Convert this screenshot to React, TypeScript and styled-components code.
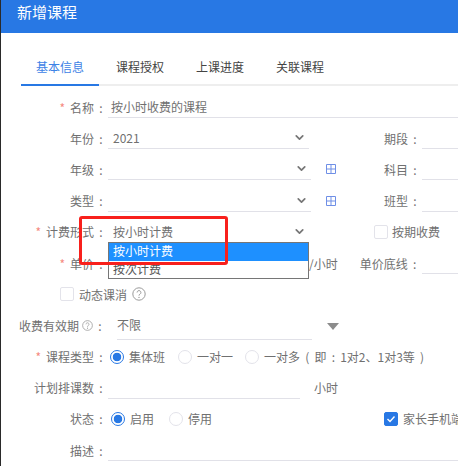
import * as React from "react";
import styled, { createGlobalStyle } from "styled-components";
import { ChevronDown } from "lucide-react";

const BLUE = "#2878e4";
const TEXT = "#707070";
const LINE = "#e1e1e8";

const GlobalStyle = createGlobalStyle`
	html, body {
		margin: 0;
		padding: 0;
		background: #ffffff;
	}
	body {
		font-family: "Noto Sans CJK SC", "Noto Sans", sans-serif;
		font-size: 12px;
		color: ${TEXT};
	}
`;

const Page = styled.div`
	position: relative;
	width: 458px;
	height: 466px;
	overflow: hidden;
	box-sizing: border-box;
	border-left: 1px solid #2a2a2a;
	background: #ffffff;
`;

const Header = styled.div`
	height: 33px;
	padding-left: 16px;
	background: ${BLUE};
	color: #ffffff;
	font-size: 15px;
	line-height: 24px;
`;

const Tabs = styled.div`
	display: flex;
	height: 35px;
	margin: 16px 0 0 20px;
	border-bottom: 2px solid #eeeeee;
`;

const Tab = styled.div<{ $active?: boolean }>`
	width: 78px;
	margin-right: 2px;
	margin-bottom: -2px;
	text-align: center;
	line-height: 35px;
	color: ${(p) => (p.$active ? "#3d82e6" : "#444444")};
	border-bottom: 2px solid ${(p) => (p.$active ? BLUE : "transparent")};
`;

const Form = styled.div`
	padding-top: 5.5px;
`;

const Row = styled.div`
	display: flex;
	align-items: center;
	height: 31.2px;
`;

const Label = styled.div<{ $w?: number }>`
	flex: none;
	display: flex;
	align-items: center;
	justify-content: flex-end;
	width: ${(p) => p.$w ?? 107}px;
	box-sizing: border-box;
	white-space: nowrap;
`;

const Star = styled.span`
	margin-right: 5px;
	color: #f58a80;
`;

const Colon = styled.span`
	width: 14px;
	text-align: center;
`;

const Field = styled.div<{ $w: number; $pad?: number; $h?: number; $left?: number }>`
	position: relative;
	flex: none;
	display: flex;
	align-items: center;
	justify-content: space-between;
	width: ${(p) => p.$w}px;
	height: ${(p) => p.$h ?? 22}px;
	margin-left: ${(p) => p.$left ?? 0}px;
	padding: 0 4px 0 ${(p) => p.$pad ?? 4}px;
	box-sizing: border-box;
	border-bottom: 1px solid ${LINE};
`;

const Value = styled.span`
	white-space: nowrap;
`;

const Chevron = styled(ChevronDown)`
	width: 13px;
	height: 13px;
	margin-right: -1px;
	color: #777777;
	stroke-width: 3.2;
`;

const Dropdown = styled.div`
	position: absolute;
	left: 0;
	top: 21.5px;
	z-index: 2;
	width: 201px;
	height: 37px;
	box-sizing: border-box;
	border: 1px solid #767676;
	background: #ffffff;
	color: #555555;
`;

const Option = styled.div<{ $on?: boolean }>`
	height: 17.5px;
	line-height: 16px;
	padding-left: 4px;
	background: ${(p) => (p.$on ? "#1e90ff" : "transparent")};
	color: ${(p) => (p.$on ? "#ffffff" : "#555555")};
`;

const Callout = styled.div`
	position: absolute;
	left: 78px;
	top: 216px;
	z-index: 3;
	width: 149px;
	height: 49px;
	box-sizing: border-box;
	border: 3px solid #f8201c;
	border-radius: 3px;
`;

const Tick = styled.span<{ $on?: boolean }>`
	flex: none;
	display: inline-flex;
	align-items: center;
	justify-content: center;
	width: 14px;
	height: 14px;
	box-sizing: border-box;
	border: 1px solid ${(p) => (p.$on ? BLUE : "#e3e3ea")};
	border-radius: 2px;
	background: ${(p) => (p.$on ? BLUE : "#ffffff")};
`;

const CheckLine = styled.div<{ $left: number; $gap?: number }>`
	display: flex;
	align-items: center;
	gap: ${(p) => p.$gap ?? 5}px;
	margin-left: ${(p) => p.$left}px;
	white-space: nowrap;
`;

const RadioGroup = styled.div<{ $left?: number }>`
	display: flex;
	align-items: center;
	margin-left: ${(p) => p.$left ?? 2}px;
`;

const RadioItem = styled.div<{ $gap: number }>`
	display: flex;
	align-items: center;
	gap: 5px;
	margin-right: ${(p) => p.$gap}px;
	white-space: nowrap;
`;

const RadioDot = styled.span<{ $on?: boolean }>`
	flex: none;
	width: 14px;
	height: 14px;
	box-sizing: border-box;
	border-radius: 50%;
	border: 1px solid ${(p) => (p.$on ? BLUE : "#e3e3ea")};
	background: ${(p) => (p.$on ? `radial-gradient(circle, ${BLUE} 0 4px, #ffffff 4.6px)` : "#ffffff")};
`;

const WideNote = styled.span`
	word-spacing: 2.5px;
`;

const Suffix = styled.span<{ $left: number }>`
	margin-left: ${(p) => p.$left}px;
	white-space: nowrap;
`;

const Caret = styled.span`
	flex: none;
	width: 0;
	height: 0;
	margin: 2px 0 0 15px;
	border-left: 6px solid transparent;
	border-right: 6px solid transparent;
	border-top: 7px solid #8c8c8c;
`;

const HelpSpacer = styled.span`
	width: 3px;
`;

const GridGlyph = styled.svg`
	flex: none;
	margin-left: 15px;
`;

const HelpGlyph = styled.svg`
	flex: none;
`;

function GridIcon() {
	return (
		<GridGlyph width="10" height="10" viewBox="0 0 10 10">
			<path d="M.5.5h9v9h-9zM5 .5v9M.5 5h9" fill="none" stroke="#6f8fe6" strokeWidth="1" />
		</GridGlyph>
	);
}

function HelpIcon({ size }: { size: number }) {
	return (
		<HelpGlyph width={size} height={size} viewBox="0 0 14 14">
			<circle cx="7" cy="7" r="6.2" fill="none" stroke="#9a9a9a" strokeWidth="1" />
			<path d="M5.1 5.5a1.9 1.9 0 1 1 2.9 1.6c-.7.4-1 .8-1 1.5" fill="none" stroke="#9a9a9a" strokeWidth="1" />
			<circle cx="7" cy="10.4" r=".7" fill="#9a9a9a" />
		</HelpGlyph>
	);
}

function FormLabel({ text, required, width }: { text: string; required?: boolean; width?: number }) {
	return (
		<Label $w={width}>
			{required && <Star>*</Star>}
			{text}
			<Colon>:</Colon>
		</Label>
	);
}

export default function App() {
	return (
		<>
			<GlobalStyle />
			<Page>
				<Header>新增课程</Header>
				<Tabs>
					<Tab $active>基本信息</Tab>
					<Tab>课程授权</Tab>
					<Tab>上课进度</Tab>
					<Tab>关联课程</Tab>
				</Tabs>
				<Form>
					<Row>
						<FormLabel text="名称" required />
						<Field $w={350} $pad={3}>
							<Value>按小时收费的课程</Value>
						</Field>
					</Row>
					<Row>
						<FormLabel text="年份" />
						<Field $w={201} $pad={5}>
							<Value>2021</Value>
							<Chevron />
						</Field>
						<FormLabel text="期段" width={113} />
						<Field $w={40}>&nbsp;</Field>
					</Row>
					<Row>
						<FormLabel text="年级" />
						<Field $w={203}>
							&nbsp;
							<Chevron />
						</Field>
						<GridIcon />
						<FormLabel text="科目" width={86} />
						<Field $w={40}>&nbsp;</Field>
					</Row>
					<Row>
						<FormLabel text="类型" />
						<Field $w={203}>
							&nbsp;
							<Chevron />
						</Field>
						<GridIcon />
						<FormLabel text="班型" width={86} />
						<Field $w={40}>&nbsp;</Field>
					</Row>
					<Row>
						<FormLabel text="计费形式" required />
						<Field $w={201} $pad={5}>
							<Value>按小时计费</Value>
							<Chevron />
							<Dropdown>
								<Option $on>按小时计费</Option>
								<Option>按次计费</Option>
							</Dropdown>
						</Field>
						<CheckLine $left={65} $gap={4}>
							<Tick />
							按期收费
						</CheckLine>
					</Row>
					<Row>
						<FormLabel text="单价" required />
						<Field $w={201}>&nbsp;</Field>
						<Suffix $left={0}>/小时</Suffix>
						<FormLabel text="单价底线" width={84} />
						<Field $w={40}>&nbsp;</Field>
					</Row>
					<Row>
						<CheckLine $left={59}>
							<Tick />
							动态课消
							<HelpIcon size={14} />
						</CheckLine>
					</Row>
					<Row>
						<Label $w={106}>
							收费有效期
							<HelpSpacer />
							<HelpIcon size={11} />
							<Colon>:</Colon>
						</Label>
						<Field $w={195} $h={30} $pad={0} $left={10}>
							<Value>不限</Value>
						</Field>
						<Caret />
					</Row>
					<Row>
						<FormLabel text="课程类型" required />
						<RadioGroup>
							<RadioItem $gap={13}>
								<RadioDot $on />
								集体班
							</RadioItem>
							<RadioItem $gap={12}>
								<RadioDot />
								一对一
							</RadioItem>
							<RadioItem $gap={0}>
								<RadioDot />
								<WideNote>一对多 ( 即 : 1对2、1对3等 )</WideNote>
							</RadioItem>
						</RadioGroup>
					</Row>
					<Row>
						<FormLabel text="计划排课数" />
						<Field $w={192}>&nbsp;</Field>
						<Suffix $left={14}>小时</Suffix>
					</Row>
					<Row>
						<FormLabel text="状态" />
						<RadioGroup $left={3}>
							<RadioItem $gap={15}>
								<RadioDot $on />
								启用
							</RadioItem>
							<RadioItem $gap={0}>
								<RadioDot />
								停用
							</RadioItem>
						</RadioGroup>
						<CheckLine $left={172}>
							<Tick $on>
								<svg width="10" height="10" viewBox="0 0 10 10">
									<path d="M1.5 5l2.5 2.5 4.5-5" fill="none" stroke="#ffffff" strokeWidth="1.4" />
								</svg>
							</Tick>
							家长手机端
						</CheckLine>
					</Row>
					<Row>
						<FormLabel text="描述" />
						<Field $w={350}>&nbsp;</Field>
					</Row>
				</Form>
				<Callout />
			</Page>
		</>
	);
}
